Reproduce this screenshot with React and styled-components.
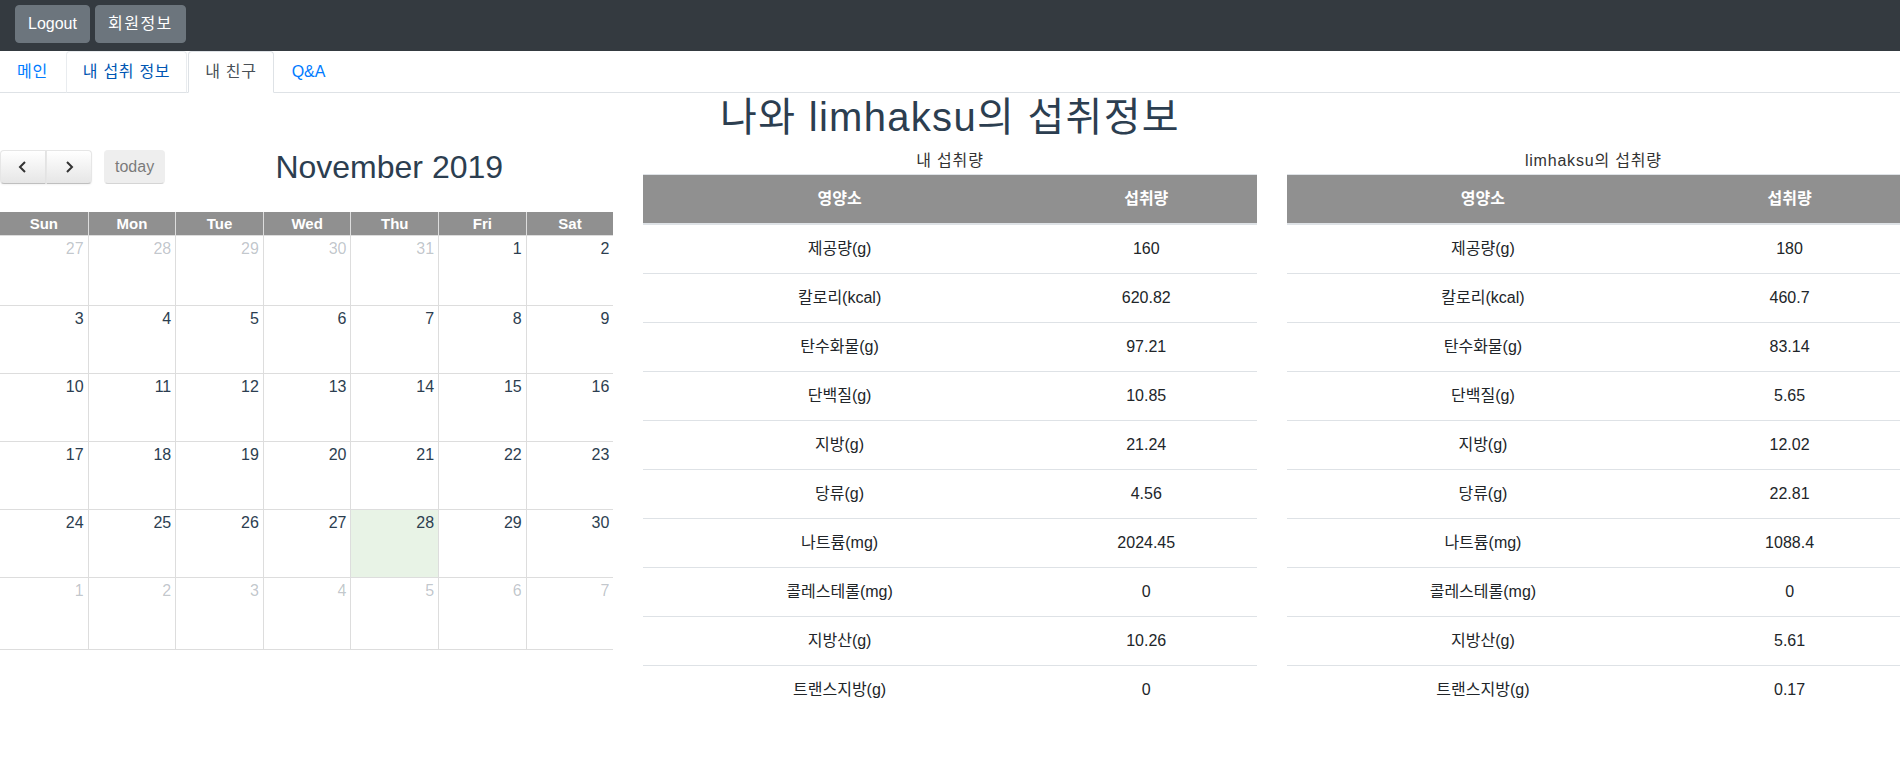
import React from 'react';
import styled, { createGlobalStyle } from 'styled-components';

const GlobalStyle = createGlobalStyle`
  body {
    margin: 0;
    font-family: "Liberation Sans", "Noto Sans CJK KR", Arial, sans-serif;
    font-size: 16px;
    line-height: 1.5;
    color: #212529;
    background: #fff;
    overflow-x: hidden;
  }
  * { box-sizing: border-box; }
`;

const NavBar = styled.nav`
  height: 51px;
  background: #343a40;
  display: flex;
  align-items: flex-start;
  gap: 5px;
  padding: 5px 15px 0;
`;

const NavButton = styled.button`
  font: inherit;
  height: 38px;
  padding: 6px 12px;
  color: #fff;
  background: #6c757d;
  border: 1px solid #6c757d;
  border-radius: 4px;
  letter-spacing: ${p => (p.$ko ? '1.5px' : 'normal')};
`;

const Tabs = styled.ul`
  display: flex;
  list-style: none;
  margin: 0;
  padding: 0;
  border-bottom: 1px solid #dee2e6;
`;

const Tab = styled.li`
  margin-bottom: -1px;
  margin-right: 1px;
`;

const TabLink = styled.a`
  display: block;
  padding: 8px 16px;
  text-decoration: none;
  letter-spacing: ${p => (p.$ko ? '0.7px' : 'normal')};
  border: 1px solid transparent;
  border-top-left-radius: 4px;
  border-top-right-radius: 4px;
  color: ${p => (p.$active ? '#495057' : p.$hover ? '#0056b3' : '#007bff')};
  background: ${p => (p.$active ? '#fff' : 'transparent')};
  border-color: ${p =>
    p.$active ? '#dee2e6 #dee2e6 #fff' : p.$hover ? '#e9ecef #e9ecef #dee2e6' : 'transparent'};
`;

const Title = styled.h1`
  margin: 0 0 8px;
  text-align: center;
  font-size: 40px;
  font-weight: 400;
  line-height: 1.2;
  letter-spacing: 1.3px;
  color: #2c3e50;
`;

const Columns = styled.div`
  display: grid;
  grid-template-columns: repeat(3, 1fr);
  column-gap: 30px;
  width: 1900px;
`;

const Toolbar = styled.div`
  display: flex;
  align-items: center;
  height: 34px;
  margin: 1px 0 28px;
`;

const ButtonGroup = styled.div`
  display: flex;
`;

const FcButton = styled.button`
  height: 34px;
  width: ${p => p.$w || 'auto'};
  padding: 0 10px;
  font-family: inherit;
  font-size: 16px;
  color: #333;
  background: ${p => (p.$disabled ? '#e6e6e6' : 'linear-gradient(#fff, #e6e6e6)')};
  border: 1px solid;
  border-color: #e6e6e6 #e6e6e6 #bfbfbf;
  border-radius: ${p => p.$radius || '4px'};
  box-shadow: ${p => (p.$disabled ? 'none' : 'inset 0 1px 0 rgba(255,255,255,.2), 0 1px 2px rgba(0,0,0,.05)')};
  opacity: ${p => (p.$disabled ? 0.65 : 1)};
  display: flex;
  align-items: center;
  justify-content: center;
  margin-left: ${p => p.$ml || '0'};
`;

const CalTitle = styled.h2`
  flex: 1;
  margin: 0;
  text-align: center;
  font-size: 32px;
  font-weight: 400;
  line-height: 1.2;
  color: #2c3e50;
`;

const CalGrid = styled.div`
  display: grid;
  grid-template-columns: repeat(7, 1fr);
  grid-template-rows: 23px 70px 68px 68px 68px 68px 72px;
  border-bottom: 1px solid #ddd;
`;

const HeadCell = styled.div`
  background: #909090;
  color: #fff;
  font-weight: bold;
  font-size: 15px;
  line-height: 23px;
  text-align: center;
  border-left: 1px solid #ddd;
  &:first-child { border-left: none; }
`;

const DayCell = styled.div`
  border-left: ${p => (p.$first ? 'none' : '1px solid #ddd')};
  border-top: 1px solid #ddd;
  background: ${p => (p.$today ? '#e8f3e6' : '#fff')};
  text-align: right;
  padding: 3px 4px 0;
  font-size: 16px;
  line-height: 20px;
  color: ${p => (p.$other ? 'rgba(44,62,80,.3)' : '#2c3e50')};
`;

const Caption = styled.div`
  text-align: center;
  font-size: 16px;
  line-height: 24px;
  color: #333;
  letter-spacing: 0.8px;
  padding-bottom: 1px;
`;

const Table = styled.table`
  width: 100%;
  border-collapse: collapse;
  color: #212529;
  th, td {
    padding: 12px;
    text-align: center;
    border-top: 1px solid #dee2e6;
    vertical-align: middle;
  }
  th {
    background: #909090;
    color: #fff;
    font-weight: bold;
    border-bottom: 2px solid #dee2e6;
  }
  th:first-child { width: 64%; }
`;

const Chevron = ({ dir }) => (
  <svg width="10" height="14" viewBox="0 0 10 14">
    <polyline
      points={dir === 'left' ? '7,2 2,7 7,12' : '3,2 8,7 3,12'}
      fill="none"
      stroke="#333"
      strokeWidth="2"
    />
  </svg>
);

const weeks = [
  [27, 28, 29, 30, 31, 1, 2],
  [3, 4, 5, 6, 7, 8, 9],
  [10, 11, 12, 13, 14, 15, 16],
  [17, 18, 19, 20, 21, 22, 23],
  [24, 25, 26, 27, 28, 29, 30],
  [1, 2, 3, 4, 5, 6, 7],
];

const nutrients = [
  '제공량(g)', '칼로리(kcal)', '탄수화물(g)', '단백질(g)', '지방(g)',
  '당류(g)', '나트륨(mg)', '콜레스테롤(mg)', '지방산(g)', '트랜스지방(g)',
];
const mine = ['160', '620.82', '97.21', '10.85', '21.24', '4.56', '2024.45', '0', '10.26', '0'];
const friend = ['180', '460.7', '83.14', '5.65', '12.02', '22.81', '1088.4', '0', '5.61', '0.17'];

function Calendar() {
  return (
    <div>
      <Toolbar>
        <ButtonGroup>
          <FcButton $w="46px" $radius="4px 0 0 4px"><Chevron dir="left" /></FcButton>
          <FcButton $w="46px" $radius="0 4px 4px 0"><Chevron dir="right" /></FcButton>
        </ButtonGroup>
        <FcButton $disabled $ml="12px">today</FcButton>
        <CalTitle>November 2019</CalTitle>
      </Toolbar>
      <CalGrid>
        {['Sun', 'Mon', 'Tue', 'Wed', 'Thu', 'Fri', 'Sat'].map(d => (
          <HeadCell key={d}>{d}</HeadCell>
        ))}
        {weeks.map((w, wi) =>
          w.map((d, di) => {
            const other = (wi === 0 && d > 20) || wi === 5;
            return (
              <DayCell
                key={wi + '-' + di}
                $first={di === 0}
                $other={other}
                $today={wi === 4 && d === 28}
              >
                {d}
              </DayCell>
            );
          })
        )}
      </CalGrid>
    </div>
  );
}

function IntakeTable({ caption, values }) {
  return (
    <div>
      <Caption>{caption}</Caption>
      <Table>
        <thead>
          <tr>
            <th>영양소</th>
            <th>섭취량</th>
          </tr>
        </thead>
        <tbody>
          {nutrients.map((n, i) => (
            <tr key={n}>
              <td>{n}</td>
              <td>{values[i]}</td>
            </tr>
          ))}
        </tbody>
      </Table>
    </div>
  );
}

export default function App() {
  return (
    <>
      <GlobalStyle />
      <NavBar>
        <NavButton>Logout</NavButton>
        <NavButton $ko>회원정보</NavButton>
      </NavBar>
      <Tabs>
        <Tab><TabLink href="#" $ko>메인</TabLink></Tab>
        <Tab><TabLink href="#" $ko $hover>내 섭취 정보</TabLink></Tab>
        <Tab><TabLink href="#" $ko $active>내 친구</TabLink></Tab>
        <Tab><TabLink href="#">Q&amp;A</TabLink></Tab>
      </Tabs>
      <Title>나와 limhaksu의 섭취정보</Title>
      <Columns>
        <Calendar />
        <IntakeTable caption="내 섭취량" values={mine} />
        <IntakeTable caption="limhaksu의 섭취량" values={friend} />
      </Columns>
    </>
  );
}
